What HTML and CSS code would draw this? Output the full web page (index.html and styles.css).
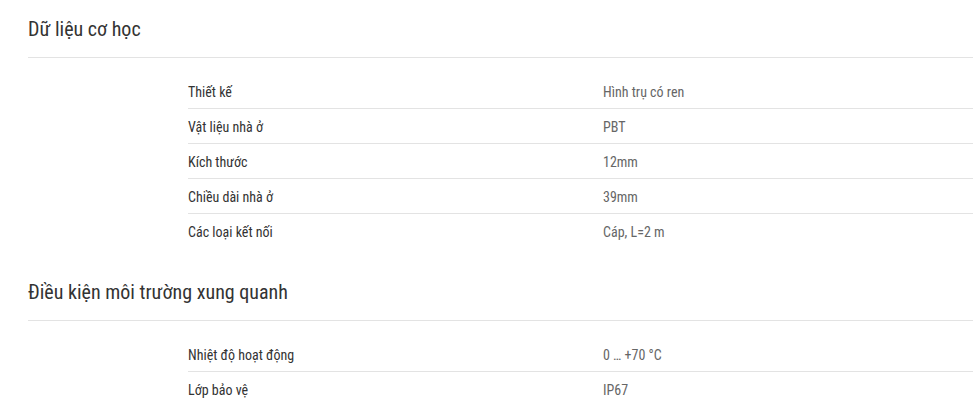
FILE: index.html
```html
<!DOCTYPE html>
<html lang="vi">
<head>
<meta charset="utf-8">
<link rel="stylesheet" href="styles.css">
</head>
<body>
<div class="page">
  <section class="section">
    <h2 class="section-title">Dữ liệu cơ học</h2>
    <div class="spec-table">
      <div class="spec-row"><div class="spec-label">Thiết kế</div><div class="spec-value">Hình trụ có ren</div></div>
      <div class="spec-row"><div class="spec-label">Vật liệu nhà ở</div><div class="spec-value">PBT</div></div>
      <div class="spec-row"><div class="spec-label">Kích thước</div><div class="spec-value">12mm</div></div>
      <div class="spec-row"><div class="spec-label">Chiều dài nhà ở</div><div class="spec-value">39mm</div></div>
      <div class="spec-row"><div class="spec-label">Các loại kết nối</div><div class="spec-value">Cáp, L=2 m</div></div>
    </div>
  </section>
  <section class="section">
    <h2 class="section-title">Điều kiện môi trường xung quanh</h2>
    <div class="spec-table">
      <div class="spec-row"><div class="spec-label">Nhiệt độ hoạt động</div><div class="spec-value">0 … +70 °C</div></div>
      <div class="spec-row"><div class="spec-label">Lớp bảo vệ</div><div class="spec-value">IP67</div></div>
    </div>
  </section>
</div>
</body>
</html>
```
FILE: styles.css
```css
html, body {
  margin: 0;
  padding: 0;
  background: #fff;
}
body {
  font-family: "Roboto Condensed", Roboto, "Liberation Sans", sans-serif;
  font-stretch: 87.5%;
  color: #333;
}
.page {
  padding-left: 28px;
}
.section + .section {
  margin-top: 15px;
}
.section-title {
  margin: 0;
  padding: 17px 0 16px;
  font-size: 20px;
  line-height: 24px;
  font-weight: 400;
  color: #333;
  border-bottom: 1px solid #e3e3e3;
}
.spec-table {
  margin: 16px 0 0 160px;
}
.spec-row {
  display: grid;
  grid-template-columns: 415px 1fr;
  align-items: center;
  font-size: 14px;
  line-height: 20px;
  padding-top: 1px;
  height: 33px;
  border-bottom: 1px solid #e3e3e3;
}
.spec-row:last-child {
  border-bottom: none;
}
.spec-label {
  color: #333;
}
.spec-value {
  color: #666;
}
```
